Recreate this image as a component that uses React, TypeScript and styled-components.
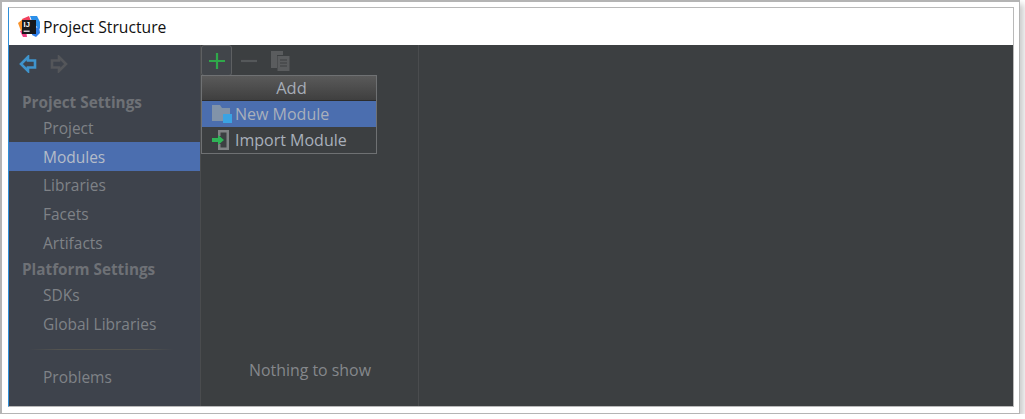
import styled, { createGlobalStyle } from "styled-components";

const GlobalStyle = createGlobalStyle`
  html, body {
    margin: 0;
    padding: 0;
    background: #fff;
    overflow: hidden;
  }
  * {
    box-sizing: border-box;
  }
`;

const Frame = styled.div`
  width: 1020px;
  height: 414px;
  padding: 5px 5px 6px 6px;
  background: #fff;
  border: 2px solid #b4b4b4;
  border-width: 2px 1px 1px 2px;
  box-shadow: 4px 4px 6px rgba(0, 0, 0, 0.2);
`;

const Window = styled.div`
  height: 100%;
  display: flex;
  flex-direction: column;
  border: 1px solid #b9b9b9;
  border-left-color: #2f8fd8;
`;

const TitleBar = styled.div`
  height: 37px;
  flex: none;
  display: flex;
  align-items: center;
  gap: 3px;
  padding-left: 9px;
  background: #fff;
  color: #111;
  font: 15.7px "Open Sans", sans-serif;
`;

const Body = styled.div`
  flex: 1;
  min-height: 0;
  display: flex;
  background: #3c3f41;
  font-family: "Open Sans", sans-serif;
`;

const Sidebar = styled.div`
  width: 192px;
  flex: none;
  display: flex;
  flex-direction: column;
  background: #3e434c;
  border-right: 1px solid #4a4c4e;
`;

const NavBar = styled.div`
  height: 44.5px;
  flex: none;
  display: flex;
  align-items: center;
  gap: 13px;
  padding: 0 0 6px 10px;
`;

const SectionTitle = styled.div`
  height: 24px;
  flex: none;
  display: flex;
  align-items: center;
  padding-left: 13px;
  color: #6e7176;
  font-size: 15.3px;
  font-weight: 700;
`;

const NavItem = styled.div<{ $active?: boolean }>`
  height: 28.7px;
  flex: none;
  display: flex;
  align-items: center;
  padding-left: 34px;
  font-size: 15.5px;
  color: ${(p) => (p.$active ? "#b4bcc8" : "#7f8287")};
  background: ${(p) => (p.$active ? "#4b6eaf" : "transparent")};
`;

const Rule = styled.div`
  height: 1px;
  flex: none;
  margin: 11px 26px 12px 20px;
  background: linear-gradient(90deg, transparent, #53534f 20%, #53534f 80%, transparent);
`;

const ListPanel = styled.div`
  position: relative;
  width: 218px;
  flex: none;
  display: flex;
  flex-direction: column;
  border-right: 1px solid #4a4c4e;
`;

const ToolBar = styled.div`
  height: 31px;
  flex: none;
  display: flex;
  align-items: center;
  gap: 1px;
`;

const ToolButton = styled.div<{ $pressed?: boolean }>`
  width: 31px;
  height: 31px;
  display: flex;
  align-items: center;
  justify-content: center;
  border: 1px solid ${(p) => (p.$pressed ? "#5e6062" : "transparent")};
  border-radius: 3px;
  background: ${(p) => (p.$pressed ? "#41454a" : "transparent")};
`;

const Empty = styled.div`
  margin-top: auto;
  padding: 0 0 25px 48px;
  color: #85888c;
  font-size: 15.9px;
`;

const Menu = styled.div`
  position: absolute;
  left: 0;
  top: 30px;
  width: 176px;
  border: 1px solid #6f7173;
  background: #3c3f41;
  z-index: 2;
`;

const MenuHeader = styled.div`
  height: 25px;
  display: flex;
  align-items: center;
  justify-content: center;
  padding: 0 0 1px 5px;
  background: linear-gradient(#5a5a5a, #3f3f3f);
  border-bottom: 1px solid #2c2c2c;
  color: #a6adb8;
  font-size: 16.5px;
`;

const MenuItem = styled.div<{ $active?: boolean }>`
  height: 26px;
  display: flex;
  align-items: center;
  gap: 2px;
  padding-left: 9px;
  color: #a9b0bb;
  font-size: 16px;
  background: ${(p) => (p.$active ? "#4b6eaf" : "transparent")};
`;

const Detail = styled.div`
  flex: 1;
`;

const AppLogo = () => (
  <svg width="22" height="22" viewBox="0 0 22 22">
    <path d="M4 3 L11 0 L13 5 L3 12 Z" fill="#f2405f" />
    <path d="M0 7 L5 3 L6 17 L3 15 Z" fill="#f8932c" />
    <path d="M2 15 L8 14 L9 21 L5 21 Z" fill="#ee3f86" />
    <path d="M12 0 L19 0 L22 6 L22 13 L15 8 Z" fill="#2b8fe9" />
    <path d="M15 12 L21 11 L22 17 L18 21 L14 19 Z" fill="#2f7fe8" />
    <rect x="4" y="4" width="14" height="14" fill="#16181b" />
    <text x="5.6" y="11.2" fill="#fff" fontFamily="Liberation Sans, sans-serif" fontWeight="700" fontSize="7.5">IJ</text>
    <rect x="5.6" y="14.6" width="6" height="1.2" fill="#fff" />
  </svg>
);

const ArrowBack = () => (
  <svg width="18" height="18" viewBox="0 0 18 18">
    <path d="M9 2 L2 9 L9 16 V12.5 H16 V5.5 H9 Z" fill="#3e434c" stroke="#3f94cc" strokeWidth="2.6" />
  </svg>
);

const ArrowForward = () => (
  <svg width="18" height="18" viewBox="0 0 18 18">
    <path d="M9 2 L16 9 L9 16 V12.5 H2 V5.5 H9 Z" fill="#3e434c" stroke="#54565a" strokeWidth="2.6" />
  </svg>
);

const Plus = () => (
  <svg width="16" height="16" viewBox="0 0 16 16">
    <path d="M8 0 V16 M0 8 H16" stroke="#2fa84a" strokeWidth="2.2" />
  </svg>
);

const Minus = () => (
  <svg width="16" height="16" viewBox="0 0 16 16">
    <path d="M0 8 H16" stroke="#55585a" strokeWidth="2.2" />
  </svg>
);

const CopyIcon = () => (
  <svg width="19" height="20" viewBox="0 0 19 20">
    <path d="M0 0 H12 V4 H6 V17 H0 Z" fill="#5a5c5e" />
    <rect x="6.5" y="5" width="12" height="15" fill="#5a5c5e" />
    <path d="M9 9 H16 M9 12 H16 M9 15 H16" stroke="#3c3f41" strokeWidth="1" />
  </svg>
);

const FolderIcon = () => (
  <svg width="22" height="18" viewBox="0 0 22 18">
    <path d="M1 0 H9 L11 3 H19 V16 H1 Z" fill="#8193a9" />
    <rect x="12" y="9" width="9" height="9" fill="#3aa3e3" />
  </svg>
);

const ImportIcon = () => (
  <svg width="22" height="20" viewBox="0 0 22 20">
    <path d="M7 0 H18 V20 H7 V14 H9.5 V17.5 H15.5 V2.5 H9.5 V6 H7 Z" fill="#808284" />
    <path d="M1 8 H7 V5 L13 10 L7 15 V12 H1 Z" fill="#2fb457" />
  </svg>
);

export default function App() {
  return (
    <>
      <GlobalStyle />
      <Frame>
        <Window>
          <TitleBar>
            <AppLogo />
            Project Structure
          </TitleBar>
          <Body>
            <Sidebar>
              <NavBar>
                <ArrowBack />
                <ArrowForward />
              </NavBar>
              <SectionTitle>Project Settings</SectionTitle>
              <NavItem>Project</NavItem>
              <NavItem $active>Modules</NavItem>
              <NavItem>Libraries</NavItem>
              <NavItem>Facets</NavItem>
              <NavItem>Artifacts</NavItem>
              <SectionTitle>Platform Settings</SectionTitle>
              <NavItem>SDKs</NavItem>
              <NavItem>Global Libraries</NavItem>
              <Rule />
              <NavItem>Problems</NavItem>
            </Sidebar>
            <ListPanel>
              <ToolBar>
                <ToolButton $pressed>
                  <Plus />
                </ToolButton>
                <ToolButton>
                  <Minus />
                </ToolButton>
                <ToolButton>
                  <CopyIcon />
                </ToolButton>
              </ToolBar>
              <Menu>
                <MenuHeader>Add</MenuHeader>
                <MenuItem $active>
                  <FolderIcon />
                  New Module
                </MenuItem>
                <MenuItem>
                  <ImportIcon />
                  Import Module
                </MenuItem>
              </Menu>
              <Empty>Nothing to show</Empty>
            </ListPanel>
            <Detail />
          </Body>
        </Window>
      </Frame>
    </>
  );
}
